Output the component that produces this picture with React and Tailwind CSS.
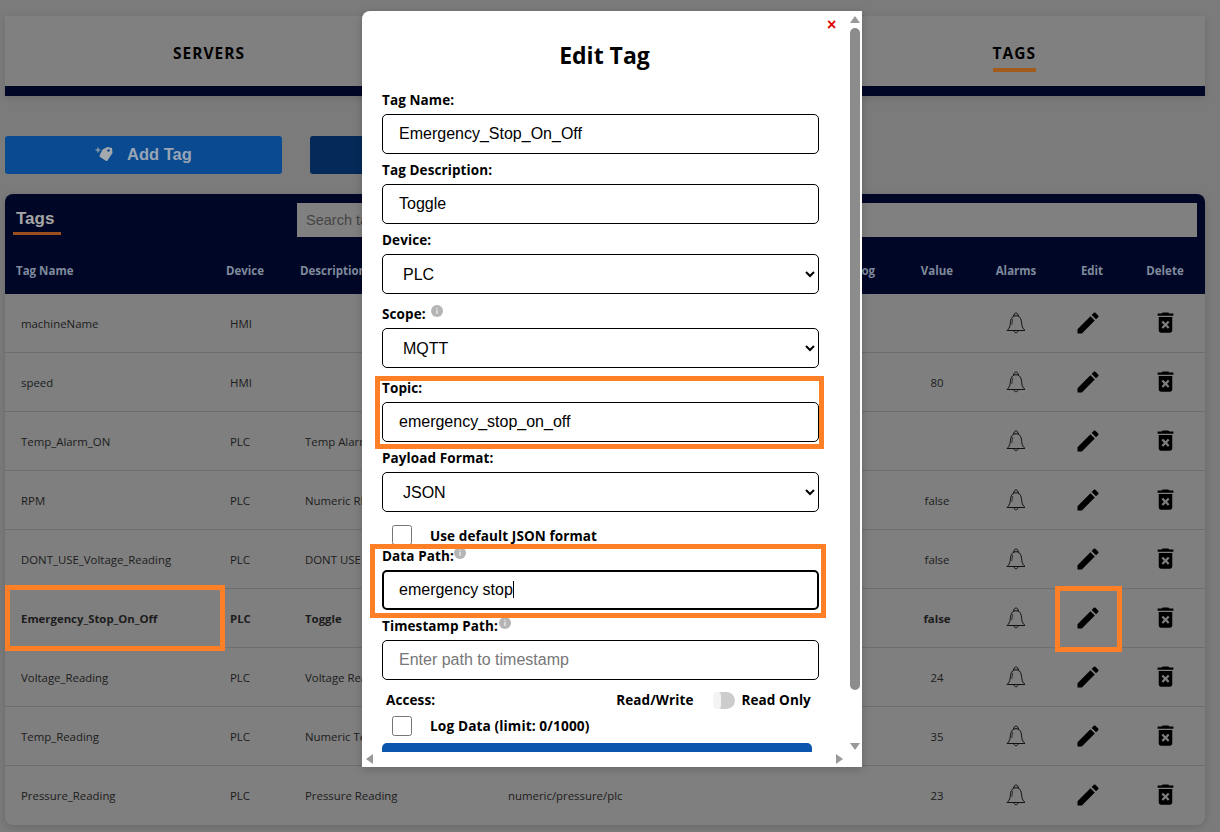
import React from "react";
import { MdEdit, MdDeleteForever } from "react-icons/md";

const rows = [
  ["machineName", "HMI", "", "", ""],
  ["speed", "HMI", "", "", "80"],
  ["Temp_Alarm_ON", "PLC", "Temp Alarm", "", ""],
  ["RPM", "PLC", "Numeric RPM", "", "false"],
  ["DONT_USE_Voltage_Reading", "PLC", "DONT USE", "", "false"],
  ["Emergency_Stop_On_Off", "PLC", "Toggle", "", "false", true],
  ["Voltage_Reading", "PLC", "Voltage Reading", "", "24"],
  ["Temp_Reading", "PLC", "Numeric Temp", "", "35"],
  ["Pressure_Reading", "PLC", "Pressure Reading", "numeric/pressure/plc", "23"],
];

const gridCols = "grid grid-cols-[220px_75px_203px_347px_47px_80px_78px_70px_80px] items-center";
const openSans = "font-['Open_Sans',sans-serif]";
const arial = "font-['Liberation_Sans',Arial,sans-serif]";

function Bell() {
  return (
    <svg width="20" height="22" viewBox="0 0 20 22" fill="none" stroke="#111" strokeWidth="1">
      <path d="M1 18.5h18c-1.6-1.4-2.8-3-3.2-6-.3-3-.6-5.800-2.300-7.500-.8-.9-2-1.300-3.500-1.300S7.300 4.100 6.500 5C4.800 6.700 4.500 9.500 4.200 12.500c-.4 3-1.600 4.600-3.200 6Z" />
      <path d="M7.500 4.500C7.800 2 8.800 1 10 1s2.200 1 2.500 3.500" />
      <path d="M6.800 7c-.7 2-.8 4-1 6" strokeWidth=".7" />
      <path d="M8 18.800c.2 1.300 1 1.900 2 1.900s1.800-.6 2-1.900" />
    </svg>
  );
}

function Info({ className = "" }) {
  return (
    <svg className={className} width="12" height="12" viewBox="0 0 12 12">
      <circle cx="6" cy="6" r="6" fill="#b5b5b5" />
      <rect x="5.300" y="5" width="1.400" height="4" fill="#e8e8e8" />
      <rect x="5.300" y="2.800" width="1.400" height="1.400" fill="#e8e8e8" />
    </svg>
  );
}

function TagIcon() {
  return (
    <svg width="18" height="16" viewBox="0 0 18 16">
      <path d="M7.500 3.500 12.500 1l4.500 1 .5 5-5 7.500a1.200 1.200 0 0 1-1.700.3L5 11a1.200 1.200 0 0 1-.3-1.700Z" fill="#a4a9ae" />
      <circle cx="13.500" cy="4.500" r="1.300" fill="#0a4a90" />
      <path d="M3 1.500v5M.5 4h5" stroke="#a4a9ae" strokeWidth="1.200" />
    </svg>
  );
}

function Label({ children, info }) {
  return (
    <div className={`flex h-6 items-start text-[13.500px] leading-5 font-bold text-black tracking-[0.1px] ${openSans}`}>
      <span>{children}</span>
      {info && <Info className={`mt-px ${info}`} />}
    </div>
  );
}

const fieldBase = `block w-[437px] h-10 rounded-[5px] border border-black bg-white text-[16px] text-black outline-none ${arial}`;

function Field({ label, value, placeholder, info, focused }) {
  return (
    <div className="mb-[6px]">
      <Label info={info}>{label}</Label>
      <input
        readOnly
        value={value}
        placeholder={placeholder}
        className={`${fieldBase} placeholder:text-[#777] ${focused ? "border-2 pl-[15px]" : "pl-4"}`}
      />
    </div>
  );
}

function Select({ label, value, info, mb = "mb-[6px]" }) {
  return (
    <div className={mb}>
      <Label info={info}>{label}</Label>
      <select defaultValue={value} className={`${fieldBase} pl-4`}>
        <option>{value}</option>
      </select>
    </div>
  );
}

function Mark({ className }) {
  return <div className={`absolute border-[5px] border-[#ff7f27] pointer-events-none ${className}`} />;
}

function Row({ r }) {
  const [name, device, desc, path, value, bold] = r;
  return (
    <div className={`${gridCols} h-[59px] border-b border-[#6e6e6e] last:border-b-transparent text-[11.400px] text-[#1c1c1c] ${bold ? "font-bold text-[#0a0a0a]" : ""}`}>
      <div className="pl-4 pt-[2px]">{name}</div>
      <div className="pl-[5px] pt-[2px]">{device}</div>
      <div className="pl-[5px] pt-[2px] whitespace-nowrap">{desc}</div>
      <div className="pl-[5px] pt-[2px]">{path}</div>
      <div />
      <div className="text-center pt-[2px]">{value}</div>
      <div className="flex justify-center"><Bell /></div>
      <div className="flex justify-center pr-[5px]"><MdEdit size={28} color="#000" /></div>
      <div className="flex justify-center -mt-[2px]"><MdDeleteForever size={27} color="#000" /></div>
    </div>
  );
}

export default function App() {
  return (
    <div className={`relative w-[1220px] h-[832px] overflow-hidden bg-[#7b7b7b] ${openSans}`}>
      <div className="flex flex-col pl-[5px] pt-4 w-[1205px]">
        {/* top tabs */}
        <div className="shadow-[0_2px_8px_rgba(0,0,0,0.12)]">
          <div className="h-[70px] bg-[#808080] grid grid-cols-3 text-[15.500px] font-bold tracking-[1px] text-black">
            <div className="flex justify-start pl-[168px] pt-[27px] leading-5">SERVERS</div>
            <div />
            <div className="flex justify-end pr-[169px] pt-[27px] leading-5">
              <span className="relative inline-block h-[26px]">
                TAGS
                <span className="absolute left-0 right-0 top-[25px] h-[4px] bg-[#a35a1d]" />
              </span>
            </div>
          </div>
          <div className="h-[10px] bg-[#000726]" />
        </div>

        {/* buttons */}
        <div className={`flex gap-7 mt-10 ${arial}`}>
          <button className="h-[38px] w-[277px] rounded-[3px] bg-[#0a4a90] flex items-center justify-center gap-[14px] pb-[2px] text-[16.500px] font-bold text-[#98a5b5]">
            <TagIcon /> Add Tag
          </button>
          <button className="h-[38px] w-[277px] rounded-[3px] bg-[#042a5a]" />
        </div>

        {/* table */}
        <div className="mt-5 rounded-lg shadow-[0_2px_8px_rgba(0,0,0,0.15)] overflow-hidden bg-[#7f7f7f]">
          <div className="h-[100px] bg-[#000726] flex flex-col">
            <div className="flex items-start pt-[9px] h-[62px]">
              <div className={`relative w-[292px] pl-[11px] text-[17px] font-bold leading-[32px] text-[#a5a5a5] ${arial}`}>
                Tags
                <span className="absolute left-2 top-[29px] w-[48px] h-[3px] bg-[#9a4f1c]" />
              </div>
              <input readOnly placeholder="Search tags..." className={`w-[900px] h-[34px] bg-[#808080] pl-[9px] text-[14.500px] outline-none placeholder:text-[#454545] ${arial}`} />
            </div>
            <div className={`${gridCols} h-[30px] text-[11.500px] font-bold text-[#7f8a9c]`}>
              <div className="pl-[11px]">Tag Name</div>
              <div className="pl-[1px]">Device</div>
              <div>Description</div>
              <div />
              <div className="pl-[5px]">Log</div>
              <div className="text-center">Value</div>
              <div className="text-center">Alarms</div>
              <div className="text-center pl-[4px]">Edit</div>
              <div className="text-center">Delete</div>
            </div>
          </div>
          {rows.map((r) => <Row key={r[0]} r={r} />)}
        </div>
      </div>

      {/* annotations on the page */}
      <Mark className="left-[5px] top-[585px] w-[220px] h-[66px]" />
      <Mark className="left-[1055px] top-[586px] w-[67px] h-[66px]" />

      {/* modal */}
      <div className="absolute left-[362px] top-[11px] w-[500px] h-[756px] bg-white rounded-tl-lg shadow-[0_2px_10px_rgba(0,0,0,0.2)] overflow-hidden">
        <div className="h-[741px] overflow-hidden pl-5">
          <div className={`text-center w-[445px] pt-[28px] h-[79px] text-[23px] leading-8 font-bold text-black ${openSans}`}>Edit Tag</div>
          <Field label="Tag Name:" value="Emergency_Stop_On_Off" />
          <Field label="Tag Description:" value="Toggle" />
          <Select label="Device:" value="PLC" mb="mb-[10px]" />
          <Select label="Scope:" value="MQTT" info="ml-[5px]" mb="mb-[10px]" />
          <Field label="Topic:" value="emergency_stop_on_off" />
          <Select label="Payload Format:" value="JSON" mb="mb-[13px]" />
          <div className="flex items-center h-5 pl-[10px] mb-[1px]">
            <input type="checkbox" readOnly className="w-5 h-5 m-0" />
            <span className={`ml-[18px] mt-[2px] text-[13.500px] font-bold text-black tracking-[0.1px] ${openSans}`}>Use default JSON format</span>
          </div>
          <div className="relative">
            <Field label="Data Path:" value="emergency stop" info="ml-0" focused />
            <span className="absolute left-[131px] top-[35px] w-px h-[17px] bg-black" />
          </div>
          <Field label="Timestamp Path:" placeholder="Enter path to timestamp" info="ml-[1px]" />
          <div className={`flex items-center h-5 pl-1 mt-[10px] w-[437px] text-[13.500px] font-bold text-black tracking-[0.1px] ${openSans}`}>
            <span>Access:</span>
            <span className="ml-[181px]">Read/Write</span>
            <span className="relative ml-[20px] w-[22px] h-[17px] rounded-full bg-[#ccc]">
              <span className="absolute left-0 top-0 w-[8px] h-[17px] rounded-full bg-[#f4f4f4]" />
            </span>
            <span className="ml-[6px]">Read Only</span>
          </div>
          <div className="flex items-center h-5 pl-[10px] mt-[6px]">
            <input type="checkbox" readOnly className="w-5 h-5 m-0" />
            <span className={`ml-[18px] text-[13.700px] font-bold text-black tracking-[0.1px] ${openSans}`}>Log Data (limit: 0/1000)</span>
          </div>
          <div className="mt-[7px] w-[430px] h-10 rounded-t-[5px] bg-[#0b55ae]" />
        </div>

        {/* close */}
        <button className={`absolute left-[465px] top-[6px] w-[9px] text-center text-[#e00000] text-[16px] leading-4 font-bold ${arial}`}>×</button>

        {/* scrollbars */}
        <div className="absolute right-[2px] top-[5px] w-[10px] h-[735px]">
          <svg className="absolute left-0 top-0" width="10" height="8" viewBox="0 0 10 8"><path d="M5 0 10 7H0Z" fill="#999" /></svg>
          <div className="absolute left-0 top-[12px] w-[10px] h-[662px] rounded-full bg-[#8c8c8c]" />
          <svg className="absolute left-0 bottom-0" width="10" height="8" viewBox="0 0 10 8"><path d="M5 7 10 0H0Z" fill="#999" /></svg>
        </div>
        <svg className="absolute left-[4px] bottom-[3px]" width="8" height="10" viewBox="0 0 8 10"><path d="M0 5 7 0V10Z" fill="#999" /></svg>
        <svg className="absolute right-[19px] bottom-[3px]" width="8" height="10" viewBox="0 0 8 10"><path d="M8 5 1 0V10Z" fill="#999" /></svg>
      </div>

      {/* annotations on the form */}
      <Mark className="left-[375px] top-[376px] w-[449px] h-[73px]" />
      <Mark className="left-[370px] top-[544px] w-[456px] h-[74px]" />
    </div>
  );
}
